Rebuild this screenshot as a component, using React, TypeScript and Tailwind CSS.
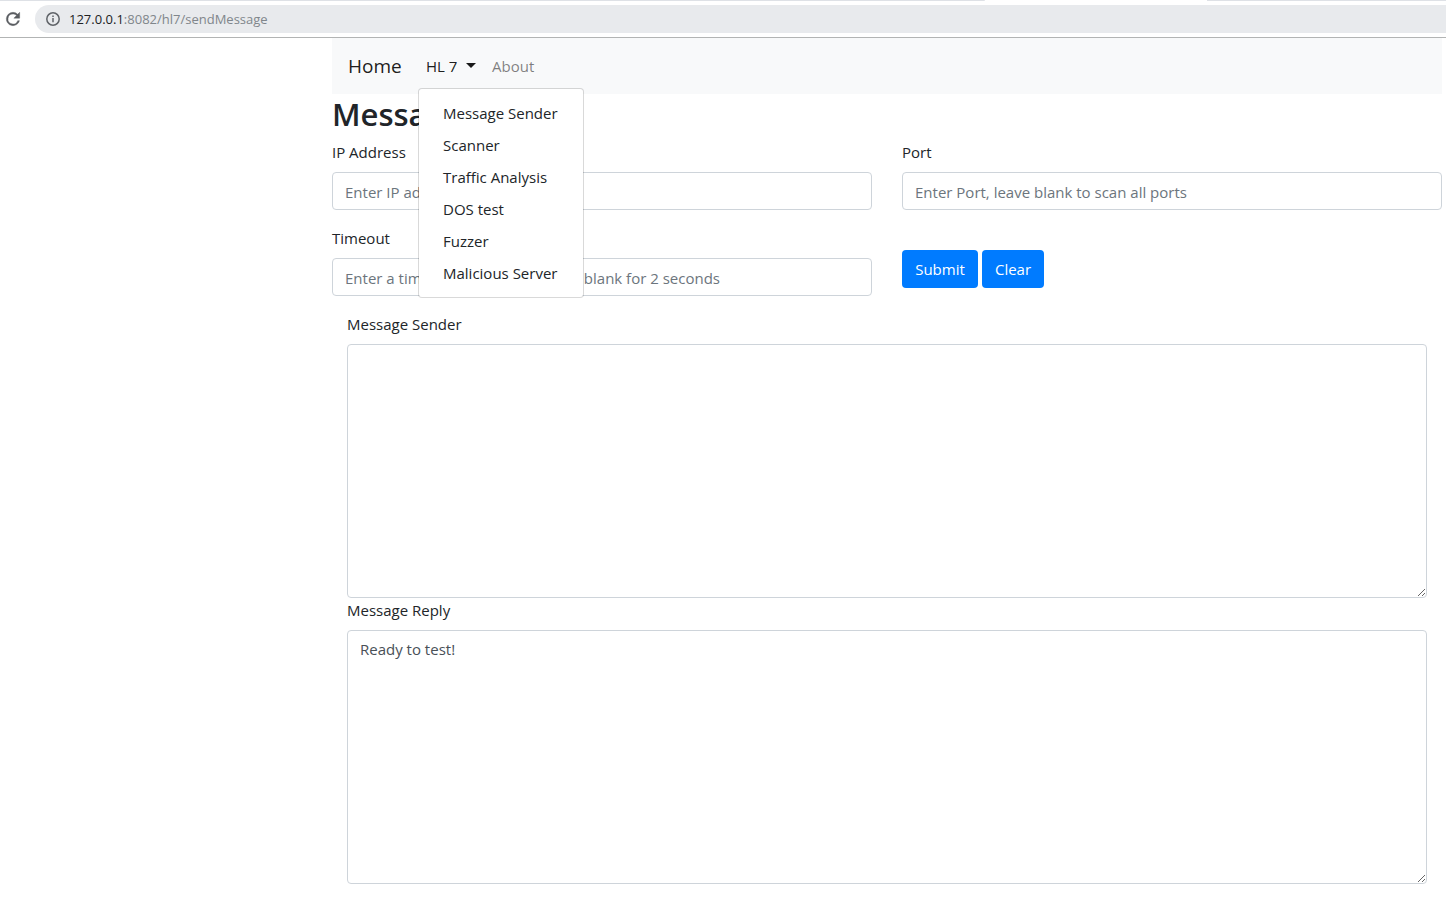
import type { InputHTMLAttributes, TextareaHTMLAttributes } from "react";

const menuItems = [
  "Message Sender",
  "Scanner",
  "Traffic Analysis",
  "DOS test",
  "Fuzzer",
  "Malicious Server",
];

function BrowserBar() {
  return (
    <header className="border-b border-[#b2b4b4] bg-white">
      <div className="flex h-px">
        <div className="w-[985px] rounded-br-sm bg-[#dee1e6]" />
        <div className="w-[222px]" />
        <div className="flex-1 bg-[#dee1e6]" />
      </div>
      <div className="flex items-center gap-3 py-1 pl-[3px]">
        <button type="button" aria-label="Reload" className="block">
          <svg viewBox="0 0 24 24" className="size-5 fill-[#5a5d61]" aria-hidden="true">
            <path
              d="M17.65 6.35A7.96 7.96 0 0 0 12 4a8 8 0 1 0 7.73 10h-2.08A6 6 0 1 1 12 6c1.66 0 3.14.69 4.22 1.78L13 11h7V4z"
              stroke="#5a5d61"
              strokeWidth="0.5"
            />
          </svg>
        </button>
        <div className="flex h-7 flex-1 items-center gap-2 rounded-l-full bg-[#e8eaed] pl-[10px]">
          <svg viewBox="0 0 16 16" className="size-4" fill="none" aria-hidden="true">
            <circle cx="8" cy="8" r="6.2" stroke="#5f6368" strokeWidth="1.5" />
            <path d="M8 7v4.3M8 4.4v1.5" stroke="#5f6368" strokeWidth="1.5" />
          </svg>
          <span className="text-[13px] leading-5 text-[#80868b]">
            <span className="text-[#202124]">127.0.0.1</span>:8082/hl7/sendMessage
          </span>
        </div>
      </div>
    </header>
  );
}

function NavBar() {
  return (
    <nav className="flex h-14 items-center bg-[#f8f9fa] px-4">
      <a href="#home" className="mr-4 w-[54px] text-[19px] leading-8 text-black/90">
        Home
      </a>
      <div className="relative">
        <button
          type="button"
          aria-haspopup="true"
          aria-expanded="true"
          className="flex h-10 w-[66px] items-center justify-between px-2 text-black/90"
        >
          HL 7
          <svg viewBox="0 0 10 6" className="h-[6px] w-[10px] fill-black/90" aria-hidden="true">
            <path d="M0 0h10L5 5z" />
          </svg>
        </button>
        <ul className="absolute top-[42px] left-0 z-10 w-[166px] rounded border border-black/15 bg-white bg-clip-padding py-2">
          {menuItems.map((item) => (
            <li key={item}>
              <a href="#menu" className="block px-6 py-1 whitespace-nowrap">
                {item}
              </a>
            </li>
          ))}
        </ul>
      </div>
      <a href="#about" className="px-2 text-black/50">
        About
      </a>
    </nav>
  );
}

function Field({ id, label, ...rest }: { id: string; label: string } & InputHTMLAttributes<HTMLInputElement>) {
  return (
    <div className="flex flex-col gap-2">
      <label htmlFor={id}>{label}</label>
      <input
        id={id}
        className="h-[38px] w-full rounded border border-[#ced4da] bg-white px-3 pt-[2px] text-[#495057] placeholder:text-[#6c757d] placeholder:opacity-100"
        {...rest}
      />
    </div>
  );
}

function Area({ id, label, ...rest }: { id: string; label: string } & TextareaHTMLAttributes<HTMLTextAreaElement>) {
  return (
    <div className="flex flex-col gap-2">
      <label htmlFor={id}>{label}</label>
      <textarea
        id={id}
        rows={10}
        className="block w-full resize-y rounded border border-[#ced4da] bg-white px-3 py-[6px] text-[#495057]"
        {...rest}
      />
    </div>
  );
}

export default function App() {
  return (
    <div className="min-h-screen bg-white font-['Open_Sans','Noto_Sans',sans-serif] text-[15px] leading-6 text-[#212529]">
      <BrowserBar />
      <main className="mr-1 ml-[332px]">
        <NavBar />
        <h1 className="mb-2 pt-[2px] text-[31px] leading-9 font-semibold">Message Sender</h1>
        <form onSubmit={(e) => e.preventDefault()}>
          <div className="grid grid-cols-2 gap-x-[30px] gap-y-4">
            <Field id="ip" label="IP Address" placeholder="Enter IP address" />
            <Field id="port" label="Port" placeholder="Enter Port, leave blank to scan all ports" />
            <Field id="timeout" label="Timeout" placeholder="Enter a timeout in seconds, Leave blank for 2 seconds" />
            <div className="flex items-start gap-1 pt-6">
              <button type="submit" className="h-[38px] w-[76px] rounded bg-[#007bff] text-white">
                Submit
              </button>
              <button type="reset" className="h-[38px] w-[62px] rounded bg-[#007bff] text-white">
                Clear
              </button>
            </div>
          </div>
          <div className="mt-4 px-[15px]">
            <Area id="message" label="Message Sender" />
            <Area id="reply" label="Message Reply" defaultValue="Ready to test!" />
          </div>
        </form>
      </main>
    </div>
  );
}
